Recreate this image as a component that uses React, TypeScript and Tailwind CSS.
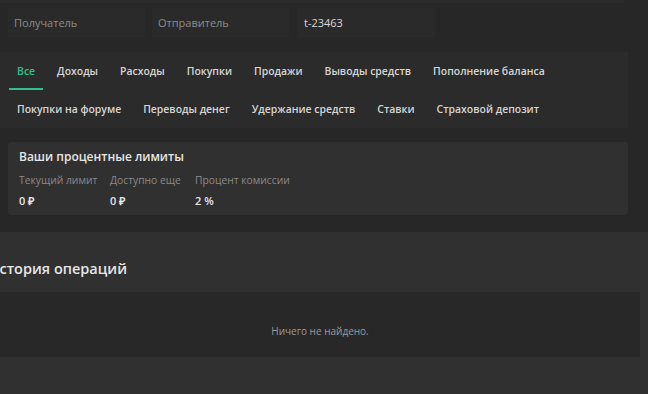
const tabsRow1 = ["Все", "Доходы", "Расходы", "Покупки", "Продажи", "Выводы средств", "Пополнение баланса"];
const tabsRow2 = ["Покупки на форуме", "Переводы денег", "Удержание средств", "Ставки", "Страховой депозит"];

function Tab({ label, active }: { label: string; active?: boolean }) {
  return (
    <div
      className={
        active
          ? "relative flex h-[38px] items-center px-2 pt-[2px] text-[10.45px] font-semibold text-[#2fc08c]"
          : "relative flex h-[38px] items-center px-2 pt-[2px] text-[10.45px] font-semibold text-[#d6d6d6]"
      }
    >
      {label}
      {active && <span className="absolute bottom-0 left-0 right-0 h-[2px] bg-[#2fc08c]" />}
    </div>
  );
}

export default function App() {
  return (
    <div className="h-[394px] w-[648px] overflow-hidden bg-[#272727] font-['Open_Sans',sans-serif]">
      <div className="h-[3px] w-[624px] bg-[#2c2c2c]" />

      {/* filters */}
      <div className="mt-[5px] flex gap-[7px] pl-2">
        <div className="flex h-[29px] w-[137px] items-center bg-[#2a2a2a] px-[6px] pt-[1px] text-[11px] text-[#8c8c8c]">
          Получатель
        </div>
        <div className="flex h-[29px] w-[137px] items-center bg-[#2a2a2a] px-[6px] pt-[1px] text-[11px] text-[#8c8c8c]">
          Отправитель
        </div>
        <div className="ml-[2px] flex h-[29px] w-[137px] items-center bg-[#2a2a2a] px-[6px] pt-[1px] text-[11px] text-[#d8d8d8]">
          t-23463
        </div>
      </div>

      {/* tabs */}
      <div className="mt-[15px] w-[628px] bg-[#2b2b2b] px-[9px]">
        <div className="flex gap-[6px]">
          {tabsRow1.map((t, i) => (
            <Tab key={t} label={t} active={i === 0} />
          ))}
        </div>
        <div className="flex gap-[6px]">
          {tabsRow2.map((t) => (
            <Tab key={t} label={t} />
          ))}
        </div>
      </div>

      {/* limits */}
      <div className="ml-[7px] mt-[14px] h-[73px] w-[621px] rounded-sm border-l border-[#262626] bg-[#303030] pl-[11px] pt-[6px]">
        <div className="text-[12px] font-semibold text-[#e6e6e6]">Ваши процентные лимиты</div>
        <div className="mt-[7px] flex text-[10.3px]">
          <div className="w-[91px]">
            <div className="text-[#8a8a8a]">Текущий лимит</div>
            <div className="mt-[5px] text-[11px] font-semibold text-[#e6e6e6]">0 ₽</div>
          </div>
          <div className="w-[85px]">
            <div className="text-[#8a8a8a]">Доступно еще</div>
            <div className="mt-[5px] text-[11px] font-semibold text-[#e6e6e6]">0 ₽</div>
          </div>
          <div>
            <div className="text-[#8a8a8a]">Процент комиссии</div>
            <div className="mt-[5px] text-[11px] font-semibold text-[#e6e6e6]">2 %</div>
          </div>
        </div>
      </div>

      {/* history */}
      <div className="mt-[17px] h-[200px] bg-[#303030]">
        <div className="-ml-[12px] pt-[26px] text-[14.5px] font-semibold text-[#e6e6e6]">История операций</div>
        <div className="mt-[12px] flex h-[65px] w-[640px] justify-center bg-[#282828] pt-[32px] text-[10px] text-[#9a9a9a]">
          Ничего не найдено.
        </div>
      </div>
    </div>
  );
}
